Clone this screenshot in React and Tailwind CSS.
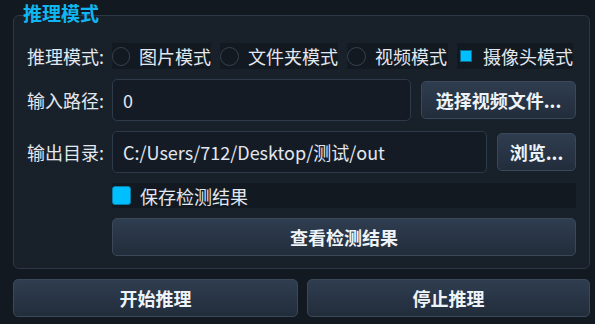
const FONT = { fontFamily: '"Noto Sans CJK SC", "Noto Sans", sans-serif' };

const Radio = ({ label, checked, className = '' }) => (
    <div className={`flex shrink-0 items-center h-[26px] bg-[#121921] whitespace-nowrap ${className}`}>
        {checked ? (
            <span className="w-[19px] flex justify-center">
                <span className="w-[12px] h-[12px] bg-[#00bfff] border border-[#0a6a90]" />
            </span>
        ) : (
            <span className="w-[19px] h-[19px] rounded-full border-[1.5px] border-[#36414f]" />
        )}
        <span className="ml-[9px] text-[18px] leading-none text-[#e2e8f0]">{label}</span>
    </div>
);

const Btn = ({ children, className = '' }) => (
    <button
        className={`h-[38px] rounded-[5px] border border-[#3a4859] bg-gradient-to-b from-[#2f3d50] to-[#222d3b] text-[18px] font-bold text-[#eef3f8] whitespace-nowrap ${className}`}
    >
        {children}
    </button>
);

const Field = ({ value, className = '' }) => (
    <div className={`h-[42px] flex items-center px-[10px] rounded-[5px] border border-[#2d3a4a] bg-[#151b24] text-[18px] text-[#e2e8f0] whitespace-nowrap ${className}`}>
        {value}
    </div>
);

export default function App() {
    return (
        <div className="w-[595px] h-[324px] bg-[#131920] pt-[15px] px-[5px] overflow-hidden" style={FONT}>
            {/* group box */}
            <div className="relative ml-[8px] w-[577px] h-[254px] rounded-[6px] border border-[#2c3846] bg-[#18202a] pt-[27px] pb-[13px] pl-[13px] pr-[13px]">
                <span className="absolute left-[9px] top-[-13px] text-[19px] font-bold leading-none text-[#0fb6f2]">推理模式</span>

                <div className="grid grid-cols-[85px_minmax(0,1fr)] gap-y-[10px] items-center">
                    <span className="text-[18px] text-[#e2e8f0] leading-none whitespace-nowrap">推理模式:</span>
                    <div className="flex items-center gap-[9px]">
                        <Radio label="图片模式" className="w-[99px]" />
                        <Radio label="文件夹模式" className="w-[118px]" />
                        <Radio label="视频模式" className="w-[101px]" />
                        <Radio label="摄像头模式" checked className="w-[116px]" />
                    </div>

                    <span className="text-[18px] text-[#e2e8f0] leading-none whitespace-nowrap">输入路径:</span>
                    <div className="flex items-center gap-[10px]">
                        <Field value="0" className="w-[299px]" />
                        <Btn className="flex-1">选择视频文件...</Btn>
                    </div>

                    <span className="text-[18px] text-[#e2e8f0] leading-none whitespace-nowrap">输出目录:</span>
                    <div className="flex items-center gap-[10px]">
                        <Field value="C:/Users/712/Desktop/测试/out" className="w-[375px]" />
                        <Btn className="flex-1">浏览...</Btn>
                    </div>

                    <div className="col-start-2 h-[25px] flex items-center bg-[#121921]">
                        <span className="w-[19px] h-[19px] rounded-[3px] bg-[#00bfff] border border-[#0a7fae]" />
                        <span className="ml-[9px] text-[18px] leading-none text-[#e2e8f0]">保存检测结果</span>
                    </div>

                    <Btn className="col-start-2 w-full">查看检测结果</Btn>
                </div>
            </div>

            {/* bottom actions */}
            <div className="flex gap-[9px] ml-[8px] mt-[10px] w-[577px]">
                <Btn className="w-[285px]">开始推理</Btn>
                <Btn className="flex-1">停止推理</Btn>
            </div>
        </div>
    );
}
